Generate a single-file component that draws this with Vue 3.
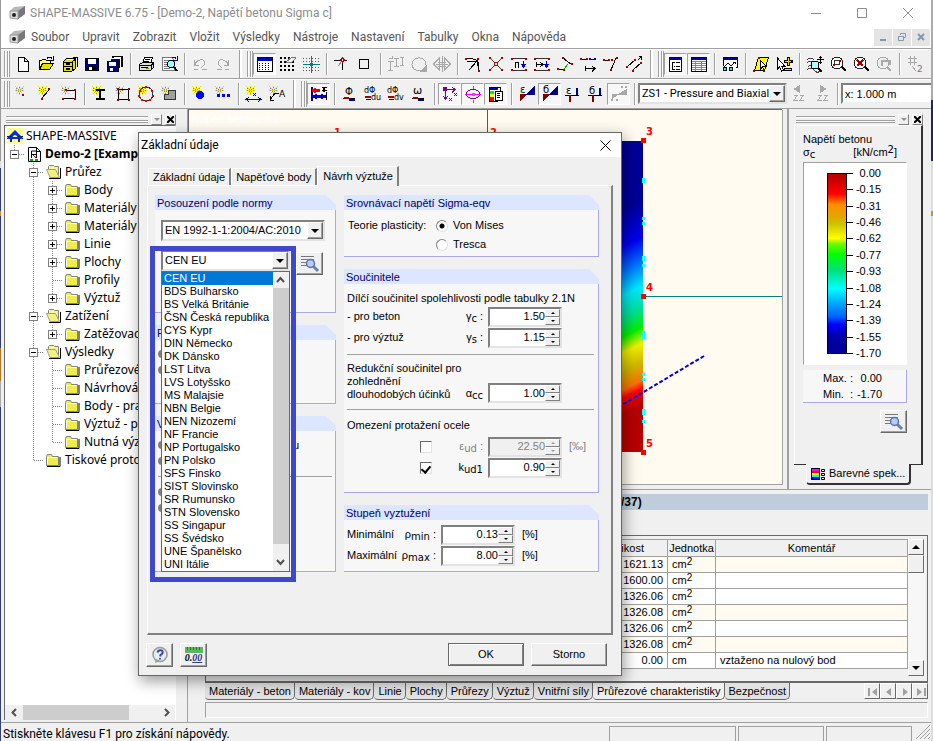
<script setup>
import { ref, reactive } from 'vue'

const p = (d, c = '#000', f = 'none', w = 1) => `<path d="${d}" stroke="${c}" fill="${f}" stroke-width="${w}"/>`
const r = (x, y, w, h, f = '#000') => `<rect x="${x}" y="${y}" width="${w}" height="${h}" fill="${f}"/>`
const dots = (c, ...xy) => xy.map(([x, y]) => r(x - 1, y - 1, 2, 2, c)).join('')
const pix = (c, ...xy) => xy.map(([x, y]) => r(x, y, 1, 1, c)).join('')
const star = r(2, 6, 9, 1, '#e8e000') + pix('#e8e000', [2, 2], [3, 3], [4, 4], [10, 2], [9, 3], [8, 4], [4, 8], [3, 9], [8, 8], [9, 9], [6, 2], [6, 4], [6, 8], [6, 10]) + pix('#808080', [6, 3], [5, 5], [7, 5], [5, 7], [7, 7], [3, 6], [9, 6], [6, 9], [3, 4], [9, 4])
const G = '#a8a8a8'
const R = '#a00000'
const N = '#000080'
const lens = p('M13 12l5 5', '#000', 'none', 2) + '<circle cx="9" cy="9" r="6" fill="#fff" stroke="#222"/>'
const glyph = (t, x, y, s = 11) => `<text x="${x}" y="${y}" font-size="${s}" font-family="DejaVu Sans" fill="#000">${t}</text>`

const icons = {
  new: p('M5.5 3.5h6l4 4v10h-10z', '#000', '#fff') + p('M11.5 3.5v4h4'),
  open: p('M3.5 15.5v-9h2l1-1h3l1 1h4v3', '#000', '#ffff80') + p('M3.5 15.5l3-6h11l-4 6z', '#000', '#e8e000') + p('M11 4.5q3-3 5 0M17.5 2v4h-4'),
  cabinet: p('M4.5 7.5l3-3h9v10l-4 3h-8z', '#000', '#e8e000') + p('M4 8h9M13 8l4-3M13 8v9M5 12.5h8') + r(7, 9, 4, 2) + r(7, 14, 4, 2) + r(8, 5, 6, 1, '#fff') + p('M14 3h4v10', '#000'),
  save: r(3, 4, 14, 13, '#000080') + p('M3.5 4.5h13v12h-12l-1-1z') + r(6, 5, 8, 5, '#fff') + r(6, 12, 8, 5, '#000') + r(7, 13, 3, 3, '#fff'),
  saveall: r(7, 2, 11, 11, '#000080') + p('M7.5 2.5h10v10h-10z') + r(9, 3, 7, 2, '#fff') + r(5, 5, 11, 10, '#000080') + p('M5.5 4.5h10v10h-10z', '#fff') + r(2, 7, 12, 10, '#000080') + p('M2.5 7.5h11v10h-11z') + r(4, 8, 7, 4, '#fff') + r(5, 14, 3, 3, '#fff'),
  print: p('M6.5 9.5l2-6h8l-2 6z', '#000', '#fff') + p('M9 5.5h5M8 7.5h5') + p('M3.5 10.5l3-2h11v5l-3 3h-11z', '#000', '#ddd') + p('M3 11.5h12l3-3M15 11v5M5 13.5h7') + r(10, 14, 3, 1, '#808000'),
  preview: p('M3.5 3.5h9l3 3v10h-12z', '#777', '#fff') + p('M5 6.5h7M5 8.5h6M5 10.5h4M5 12.5h5M5 14.5h6', '#777') + '<circle cx="12" cy="10" r="3.5" fill="#9ff" stroke="#000"/>' + p('M15 13l3 4', '#000', 'none', 2) + p('M13 3.5h3l1 1M18 2v4h-4', N),
  undo: p('M6 11.5L4.5 6v5.5H9M5 10q3-5 8-4 3 2 1 5l-3 3', G) + p('M4 15.5h4M12 15.5h5', G),
  redo: p('M14 11.5L15.5 6v5.5H11M15 10q-3-5-8-4-3 2-1 5l3 3', G) + p('M12 15.5h4M4 15.5h5', G),
  grid: r(2, 3, 16, 15, '#fff') + p('M2.5 3.5h15v14h-15z') + r(3, 4, 14, 3, '#0000c0') + [9, 11, 13, 15].map(y => p(`M4 ${y}.5h12`, '#000').replace('/>', ' stroke-dasharray="1 2"/>')).join(''),
  gridedit: [4, 8, 12, 16].map(y => `<path d="M2 ${y}h16" stroke="#000" stroke-width="2" stroke-dasharray="2 2"/>`).join('') + p('M8 8l6-5 4 1-5 5z', '#777', '#eee'),
  snap: [4, 7, 13, 16].map(y => `<path d="M2 ${y}.5h16" stroke="#555" stroke-dasharray="1 2"/>`).join('') + p('M10.5 2v17M2 10.5h17', '#008080') + p('M9 9l3 3M12 9l-3 3', '#008080'),
  axis: p('M2 6.5h13M10.5 8v8') + p('M10 7l-4 5', '#888') + p('M10.5 4l2 2-2 2-2-2z', R, '#fff'),
  box: '<rect x="4.500" y="5.500" width="9" height="9" fill="none" stroke="#000"/>',
  copy: p('M4.5 7v9M2 7.5h6M2 16.5h5M10.5 4v8M8 4.5h5M8 12.5h5M16.5 3v8M14 3.5h4M14 11.5h4M3 4h3v-2', G),
  rotate: '<path d="M15 15a7 6.500 0 1 1 2-4" fill="none" stroke="#a8a8a8"/>' + p('M12 17h5v-5z', G, G),
  mirror: p('M7.5 4v12l-6-6zM12.5 4v12l6-6z', G) + p('M10 2v16M4 10h12M6 8h8M6 12h8', G),
  t1: p('M2 4.500h6l7 2M4 7.500h8M15.5 8v9M6 16l8-9M10 7.500h4v4') + dots(R, [15, 5], [16, 17], [3, 5]),
  t2: p('M4 4l12 12M16 4L4 16', '#333') + dots(R, [4, 4], [16, 4], [4, 16], [16, 16]) + p('M8.5 8.5h3v3h-3z', R, '#fff'),
  t3: p('M3 4.5h14M3 16.5h14', '#333') + dots(R, [3, 5], [17, 5], [3, 16], [17, 16]) + p('M6.500 14V8.500h3V14') + p('M14.5 7v6M12.5 10.5l2 3 2-3z', '#0000c0', N),
  t4: p('M3 4.5h14M3 16.5h14', '#333') + dots(R, [3, 5], [17, 5], [3, 16], [17, 16]) + p('M4.5 8v5M5 10.5h5M8 8l3 2.5L8 13') + p('M14.5 7v6M12.5 10.5l2 3 2-3z', '#0000c0', N),
  t5: p('M8 4l8 6M3 15.5h6', '#000') + p('M9 15l4-5', '#0a0') + dots(R, [8, 4], [17, 10], [3, 15], [9, 16]),
  t6: p('M2 5.5h6M11 5.5h6M7 14.5h10M7.5 12v5M14 12l3 2.5-3 3') + dots(R, [3, 5], [9, 5]) + dots(N, [12, 5], [17, 5]),
  t7: p('M2 6.5h5M15 4l-5 12', '#000') + dots(R, [3, 6], [8, 6], [11, 6], [10, 16], [16, 4]),
  t8: p('M3 13l8-7M9 16l8-7', '#000') + dots(R, [3, 13], [11, 6], [9, 17], [17, 9]) + p('M15 2.500h2.500v3M14 6l3-3'),
  tree: r(3, 3, 13, 14, '#fff') + p('M3.5 3.5h12v14h-12z') + r(4, 4, 11, 2, '#0000c0') + p('M6.5 8v8M6 8.5h3M8 12.5h1M6 15.5h3M10 8.5h4M10 12.5h4M10 15.5h4'),
  table: r(2, 3, 16, 14, '#fff') + p('M2.5 3.5h15v14h-15z') + r(3, 4, 14, 2, '#0000c0') + p('M3 7.5h14M3 9.5h14M3 11.5h14M3 13.5h14M3 15.5h14M6.5 7v10M12.5 7v10', '#888'),
  legend: r(3, 3, 15, 12, '#fff') + p('M3.5 12V3.5h14v10h-2') + r(4, 4, 13, 2, N) + p('M4 13l4-4 3 3 4-4M13 8h2v2') + '<circle cx="5" cy="15" r="2" fill="#0ff" stroke="#000"/><circle cx="11" cy="15" r="2" fill="#0ff" stroke="#000"/>',
  select: p('M3.5 16.5l4-13h10l-4 13z', '#000', '#ff0') + dots(R, [3, 17], [13, 17], [8, 4]) + p('M9.5 6v9l2-2 2 4M9 6l6 6h-3', '#000', '#fff'),
  pick: p('M3.5 4v11l2-2 2 4 2-1-2-4h3z', '#000', '#fff') + p('M14 3v9M9.500 7.5h9M10 15h8', '#000', 'none', 3) + p('M14 4v7M11 7.5h6M11 15h6', '#e8e000', 'none', 1),
  zoomall: p('M2 6q4-4 7 0M2 9q4-4 7 0M3 13q3-4 5 0M2 16q4-4 7 0t6 1', '#444') + '<circle cx="10" cy="11" r="4" fill="#aff" stroke="#000"/>' + p('M13 14l4 4', '#000', 'none', 2) + p('M15.500 2v8M12 5.500h7M14 3.500h3M14 8.500h3'),
  zoomwin: lens + p('M6.5 6.5h5v4h-5z', '#333') + dots(R, [12, 7], [6, 11]),
  zoomout: lens + p('M6 6l6 6M12 6l-6 6', R, 'none', 2),
  zoomback: '<circle cx="9" cy="9" r="6" fill="#eee" stroke="#a8a8a8"/>' + p('M13 13l4 4M8 12V7h8v4', G, 'none', 2),
  half: p('M5.5 2v9M9.5 2v9M3 4.5h9M3 8.5h9M7 12l4 5', G) + `<text x="12" y="18" font-size="9" font-family="DejaVu Sans" fill="#777">2</text>`,

  pt: star + dots(R, [10, 11]),
  ln: star + p('M6 14l7-8') + dots(R, [6, 15], [13, 5]),
  rectl: star + p('M7 6.500h9v8H4') + dots(R, [16, 6], [16, 15], [4, 15], [7, 6]),
  prof: star + r(6, 5, 9, 2) + r(9, 6, 2, 10) + r(6, 14, 9, 2),
  sq: star + p('M5.5 5.5h10v10h-10z') + dots(R, [5, 5], [16, 5], [5, 16], [16, 16]),
  circ: star + '<circle cx="10" cy="10" r="7" fill="none" stroke="#333"/>' + dots('#e00', [4, 7], [16, 7], [10, 3], [10, 17], [3, 12], [17, 12], [6, 16], [14, 16]),
  area: star + p('M9.500 6.5h7v9h-11v-5h4z', '#333', '#a0a0a0'),
  bar: star + '<circle cx="10" cy="11" r="4" fill="#00f"/>',
  bars: star + r(4, 10, 3, 3, '#00f') + r(9, 10, 3, 3, '#00f') + r(14, 10, 3, 3, '#00f'),
  dim: star + p('M2 15.5h15M5 13l-3 2.5 3 2M14 13l3 2.5-3 2', N) + p('M9 9l3 3M12 9l-3 3', '#00c'),
  text: star + p('M3 16l5-7h4M3 12v4h4') + glyph('A', 12, 13, 9),
  stress: r(2, 3, 2, 14, N) + r(3, 5, 8, 3, '#e00') + r(3, 11, 14, 3, '#00c') + r(5, 4, 2, 5, '#e00') + r(6, 10, 2, 5, '#00c') + r(12, 10, 2, 5, '#00c') + p('M13 3.5h5M13 6.5h5M17.5 8v8') + r(14, 4, 2, 4),
  phi: glyph('Φ', 5, 11, 10) + p('M3 14.5h12') + p('M4 14h5', R, 'none', 2) + p('M9 16h6', N, 'none', 2),
  phiu: glyph('dΦ', 1, 9, 8) + glyph('du', 8, 16, 8) + p('M2 12.5h6', R, 'none', 2) + p('M3 15.5h5', N),
  phiv: glyph('dΦ', 1, 9, 8) + glyph('dv', 8, 16, 8) + p('M2 12.5h6', R, 'none', 2) + p('M3 15.5h5', N),
  omega: glyph('ω', 4, 10, 11) + p('M3 14.5h12') + p('M4 14h5', R, 'none', 2) + p('M9 16h6', N, 'none', 2),
  axes: p('M5.5 5v9M4 5.5h10M12 3l3 2.5-3 3M3 12l2.5 3 2.5-3', '#800080') + r(3, 3, 4, 4, '#800080') + p('M14 9l3 3M17 9l-3 3M9 14l3 3M12 14l-3 3', '#800080'),
  ell: '<ellipse cx="10" cy="10" rx="6.500" ry="4.500" fill="none" stroke="#800080"/>' + p('M10.500 2v3M10.500 16v3M2 10.5h16', '#f0f') + r(9, 9, 3, 3, '#f3f'),
  spec: r(3, 3, 12, 15, '#fff') + p('M3.500 3.500h11v4M3.500 3v14h8') + r(4, 4, 8, 2, '#00c') + r(4, 7, 4, 3, '#0e0') + r(4, 10, 4, 3, '#ff0') + r(4, 13, 4, 4, '#f00') + p('M9.5 7.5h7v9h-7zM11 9.5h3M11 11.5h3M11 13.5h3', '#000', '#fff'),
  e1: glyph('ε', 3, 9, 10) + p('M3 10.5h14') + p('M3 10.5v6l6-6z', '#800000', '#800000') + p('M10 10h7V3z', N, N),
  s1: glyph('б', 3, 9, 10) + p('M3 10.5h14') + p('M3 10.5v6l6-6z', '#800000', '#800000') + p('M10 10h7V3z', N, N),
  e2: glyph('ε', 3, 10, 10) + p('M2 11.5h14') + r(6, 11, 2, 7, '#800000') + r(13, 4, 2, 7, N),
  s2: glyph('б', 3, 10, 10) + p('M2 11.5h14') + r(6, 11, 2, 7, '#800000') + r(13, 4, 2, 7, N),
  off: p('M3 10.5h14', G) + p('M3 10.5v4l6-4zM10 10h7V6z', G, G) + p('M12 2l2 2M14 2l-2 2M16 2l2 2M18 2l-2 2M2 15l2 2M4 15l-2 2M7 15l2 2M9 15l-2 2', G),
  prev: p('M10.5 1.5v7l-5-3.5z', G, G) + p('M5 11.5h3l-3 5h4M11 11.5h3l-3 5h4', G),
  next: p('M8.5 1.5v7l5-3.5z', G, G) + p('M6 11.5h3l-3 5h4M12 11.5h3l-3 5h4', G),
}

const bar1 = [
  { id: 'new', t: 'Nový' }, { id: 'open', t: 'Otevřít' }, { id: 'cabinet', t: 'Projekty' }, { id: 'save', t: 'Uložit' }, { id: 'saveall', t: 'Uložit vše' }, '|',
  { id: 'print', t: 'Tisk' }, { id: 'preview', t: 'Náhled' }, '|', { id: 'undo', t: 'Zpět' }, { id: 'redo', t: 'Znovu' }, '#',
  { id: 'grid', t: 'Rastr', on: true }, { id: 'gridedit', t: 'Upravit rastr' }, { id: 'snap', t: 'Úchop' }, '|', { id: 'axis', t: 'Osy' }, { id: 'box', t: 'Rámeček' }, '|',
  { id: 'copy', t: 'Kopírovat' }, { id: 'rotate', t: 'Otočit' }, { id: 'mirror', t: 'Zrcadlit' }, '|',
  ...['t1', 't2', 't3', 't4', 't5', 't6', 't7', 't8'].map(id => ({ id, t: 'Úprava linie ' + id[1] })), '#',
  { id: 'tree', t: 'Navigátor', on: true }, { id: 'table', t: 'Tabulky', on: true }, '|', { id: 'legend', t: 'Zobrazení' }, '|',
  { id: 'select', t: 'Výběr' }, { id: 'pick', t: 'Přidat výběr' }, '|', { id: 'zoomall', t: 'Vše' }, { id: 'zoomwin', t: 'Zoom okno' }, { id: 'zoomout', t: 'Zoom zrušit' }, { id: 'zoomback', t: 'Zoom zpět' }, '|', { id: 'half', t: 'Měřítko' },
]
const bar2 = [
  { id: 'pt', t: 'Bod' }, { id: 'ln', t: 'Linie' }, { id: 'rectl', t: 'Polylinie' }, '|', { id: 'prof', t: 'Profil' }, { id: 'sq', t: 'Obdélník' }, { id: 'circ', t: 'Kružnice' }, { id: 'area', t: 'Plocha' }, '|',
  { id: 'bar', t: 'Prut' }, { id: 'bars', t: 'Pruty' }, '|', { id: 'dim', t: 'Kóta' }, { id: 'text', t: 'Popis' }, '#',
  { id: 'stress', t: 'Napětí', on: true }, '|', { id: 'phi', t: 'Fí' }, { id: 'phiu', t: 'Fí u' }, { id: 'phiv', t: 'Fí v' }, { id: 'omega', t: 'Omega' }, '|',
  { id: 'axes', t: 'Osy', on: true }, { id: 'ell', t: 'Elipsa', on: true }, { id: 'spec', t: 'Spektrum', on: true }, '|',
  { id: 'e1', t: 'Přetvoření' }, { id: 's1', t: 'Napětí betonu', on: true }, { id: 'e2', t: 'Přetvoření oceli' }, { id: 's2', t: 'Napětí oceli' }, { id: 'off', t: 'Hodnoty', on: true }, '|',
]

const menus = ['Soubor', 'Upravit', 'Zobrazit', 'Vložit', 'Výsledky', 'Nástroje', 'Nastavení', 'Tabulky', 'Okna', 'Nápověda']

// Each guide cell: '|' line passing by, 'T' branch, 'L' last branch; '+' or '-' adds a toggle.
const tree = [
  { g: [], icon: 'app', label: 'SHAPE-MASSIVE' },
  { g: ['L-'], icon: 'model', label: 'Demo-2 [Example', bold: true },
  { g: ['', 'T-'], icon: 'open', label: 'Průřez' },
  { g: ['', '|', 'T+'], label: 'Body' },
  { g: ['', '|', 'T+'], label: 'Materiály -' },
  { g: ['', '|', 'T+'], label: 'Materiály -' },
  { g: ['', '|', 'T+'], label: 'Linie' },
  { g: ['', '|', 'T+'], label: 'Plochy' },
  { g: ['', '|', 'T'], label: 'Profily' },
  { g: ['', '|', 'L+'], label: 'Výztuž' },
  { g: ['', 'T-'], icon: 'open', label: 'Zatížení' },
  { g: ['', '|', 'L+'], label: 'Zatěžovací' },
  { g: ['', 'T-'], icon: 'open', label: 'Výsledky' },
  { g: ['', '|', 'T'], label: 'Průřezové' },
  { g: ['', '|', 'T'], label: 'Návrhová' },
  { g: ['', '|', 'T'], label: 'Body - pra' },
  { g: ['', '|', 'T'], label: 'Výztuž - pr' },
  { g: ['', '|', 'L'], label: 'Nutná výz' },
  { g: ['', 'L'], label: 'Tiskové protok' },
]
const guide = c => {
  let d = ''
  if (c[0] === '|' || c[0] === 'T') d += 'M9.5 0V18'
  if (c[0] === 'L') d += 'M9.5 0V9'
  if (c[0] === 'T' || c[0] === 'L') d += 'M10 9.5H20'
  return d
}

const scale = ['0.00', '-0.15', '-0.31', '-0.46', '-0.62', '-0.77', '-0.93', '-1.08', '-1.24', '-1.39', '-1.55', '-1.70']

const rows = [
  { v: '1621.13', u: 'cm', e: '2', c: '', tint: true },
  { v: '1600.00', u: 'cm', e: '2', c: '' },
  { v: '1326.06', u: 'cm', e: '2', c: '' },
  { v: '1326.08', u: 'cm', e: '2', c: '', tint: true },
  { v: '1326.06', u: 'cm', e: '2', c: '' },
  { v: '1326.08', u: 'cm', e: '2', c: '', tint: true },
  { v: '0.00', u: 'cm', e: '', c: 'vztaženo na nulový bod' },
]
const sheets = ['Materiály - beton', 'Materiály - kov', 'Linie', 'Plochy', 'Průřezy', 'Výztuž', 'Vnitřní síly', 'Průřezové charakteristiky', 'Bezpečnost']
const navs = [
  { t: 'První', d: 'M3 4h2v8H3zM12 4v8L7 8z' }, { t: 'Předchozí', d: 'M10 4v8L5 8z' },
  { t: 'Další', d: 'M6 4v8l5-4z' }, { t: 'Poslední', d: 'M11 4h2v8h-2zM4 4v8l5-4z' },
]

const codes = ['CEN EU', 'BDS Bulharsko', 'BS Velká Británie', 'ČSN Česká republika', 'CYS Kypr', 'DIN Německo', 'DK Dánsko', 'LST Litva', 'LVS Lotyšsko', 'MS Malajsie', 'NBN Belgie', 'NEN Nizozemí', 'NF Francie', 'NP Portugalsko', 'PN Polsko', 'SFS Finsko', 'SIST Slovinsko', 'SR Rumunsko', 'STN Slovensko', 'SS Singapur', 'SS Švédsko', 'UNE Španělsko', 'UNI Itálie']
const code = ref('CEN EU')
const theory = ref('mises')
const limitEps = ref(false)
const limitK = ref(true)
const val = reactive({ gc: '1.50', gs: '1.15', acc: '1.00', eud: '22.50', kud: '0.90', min: '0.13', max: '8.00' })
</script>

<template>
  <div class="app">
    <header class="title">
      <svg class="logo" width="17" height="16" viewBox="0 0 17 16"><path d="M1 6l4-4 11-1v8l-7 5-8-1z" fill="#b8b8b8" /><path d="M9 6l7-5v8l-7 5z" fill="#777" /><path d="M1 6h8v8l-8-1z" fill="#ddd" stroke="#999" /><circle cx="5" cy="10" r="2" fill="#222" /></svg>
      <h1>SHAPE-MASSIVE 6.75 - [Demo-2, Napětí betonu Sigma c]</h1>
      <button aria-label="Minimalizovat"><svg width="12" height="12"><path d="M1 6.5h10" /></svg></button>
      <button aria-label="Maximalizovat"><svg width="12" height="12"><path d="M1.500 1.500h9v9h-9z" /></svg></button>
      <button aria-label="Zavřít"><svg width="12" height="12"><path d="M1 1l10 10M11 1L1 11" /></svg></button>
    </header>

    <nav class="menu">
      <svg class="logo" width="17" height="16" viewBox="0 0 17 16"><path d="M1 6l4-4 11-1v8l-7 5-8-1z" fill="#b8b8b8" /><path d="M9 6l7-5v8l-7 5z" fill="#777" /><path d="M1 6h8v8l-8-1z" fill="#ddd" stroke="#999" /><circle cx="5" cy="10" r="2" fill="#222" /></svg>
      <a v-for="m in menus" :key="m" href="#">{{ m }}</a>
      <div class="mdi">
        <button aria-label="Minimalizovat dokument"><svg width="10" height="10"><path d="M2 8h6" /></svg></button>
        <button aria-label="Obnovit dokument"><svg width="10" height="10"><path d="M3.500 3V1.500h5v4H7M1.500 4.500h5v4h-5zM1 4.500h6" class="thin" /></svg></button>
        <button aria-label="Zavřít dokument"><svg width="10" height="10"><path d="M2 2l6 6M8 2L2 8" /></svg></button>
      </div>
    </nav>

    <div class="bar">
      <i class="grip start"></i>
      <template v-for="(b, i) in bar1" :key="i">
        <i v-if="b === '|'" class="sep"></i>
        <span v-else-if="b === '#'" class="brk"><i class="grip"></i></span>
        <button v-else class="tb" :class="{ on: b.on }" :aria-label="b.t"><svg width="20" height="20" v-html="icons[b.id]"></svg></button>
      </template>
    </div>
    <div class="bar">
      <i class="grip start"></i>
      <template v-for="(b, i) in bar2" :key="i">
        <i v-if="b === '|'" class="sep"></i>
        <span v-else-if="b === '#'" class="brk"><i class="grip"></i></span>
        <button v-else class="tb" :class="{ on: b.on }" :aria-label="b.t"><svg width="20" height="20" v-html="icons[b.id]"></svg></button>
      </template>
      <div class="combo case">
        <select aria-label="Zatěžovací stav"><option>ZS1 - Pressure and Biaxial</option></select>
        <span class="drop"></span>
      </div>
      <button class="tb" aria-label="Předchozí stav"><svg width="20" height="20" v-html="icons.prev"></svg></button>
      <button class="tb" aria-label="Další stav"><svg width="20" height="20" v-html="icons.next"></svg></button>
      <i class="sep"></i>
      <input class="pos" aria-label="Poloha" value="x: 1.000 m">
    </div>

    <main class="work">
      <aside class="dock left">
        <div class="cap"><i class="ridge"></i><button aria-label="Nabídka panelu" class="mini"><i class="down"></i></button><button aria-label="Zavřít panel" class="mini"><svg width="7" height="7"><path d="M0 0l7 7M7 0L0 7" /></svg></button></div>
        <div class="treebox">
          <ul class="tree">
            <li v-for="(n, i) in tree" :key="i">
              <svg v-for="(c, k) in n.g" :key="k" class="cell" width="19" height="18">
                <path :d="guide(c)" stroke="#808080" stroke-dasharray="1 1" />
                <template v-if="c[1]">
                  <rect x="5.500" y="5.500" width="8" height="8" fill="#fff" stroke="#808080" />
                  <path :d="c[1] === '+' ? 'M7 9.5h5M9.5 7v5' : 'M7 9.5h5'" stroke="#000" />
                </template>
              </svg>
              <svg v-if="n.icon === 'app'" class="ic" width="16" height="16"><rect width="16" height="16" fill="#ffff90" /><path d="M0 10L8 2l8 8v1H0z" fill="#0030e0" /><path d="M0 8.500h16" stroke="#0020a0" /><path d="M5.500 9q2.500-4 5 0" fill="#ffff90" /><path d="M4 10v4M12 10v4" stroke="#0020c0" stroke-width="2" /></svg>
              <svg v-else-if="n.icon === 'model'" class="ic" width="16" height="16"><path d="M2.500 1.500h8l4 4v10h-12z" fill="#fff" stroke="#000" /><path d="M10.500 1.500v4h4M5.500 12V5h5v7M5 8.500h6" fill="none" stroke="#000" /><path d="M7 9l3 3" stroke="#a00" /><path d="M4 14h3M9 14h3" stroke="#0a0" stroke-width="2" /></svg>
              <svg v-else-if="n.icon === 'open'" class="ic" width="17" height="16"><path d="M3.500 5.500v-3l1-1h4l1 1h4v9" fill="#f6f6a0" stroke="#808080" /><path d="M5 13.500L1.500 5.500h9l4 8z" fill="#f2f080" stroke="#a0a080" /><path d="M4 14.500h11.500V4" fill="none" stroke="#000" /></svg>
              <svg v-else class="ic" width="17" height="16"><path d="M1.500 13.500V4.500l1-2h4l1 2h6v9z" fill="#efec50" stroke="#808080" /><path d="M2.500 12V5.500h10" fill="none" stroke="#fff" /><path d="M2 14.500h13V5" fill="none" stroke="#000" /></svg>
              <span :class="{ bold: n.bold }">{{ n.label }}</span>
            </li>
          </ul>
          <div class="hscroll"><svg width="18" height="15"><path d="M11 4L7.500 7.500 11 11" /></svg><i></i><svg width="16" height="15"><path d="M6 4l3.500 3.500L6 11" /></svg></div>
        </div>
      </aside>

      <div class="center">
        <div class="upper">
          <section class="view">
            <svg class="scene" width="594" height="375" viewBox="189 110 594 375">
              <defs>
                <linearGradient id="stress" gradientUnits="userSpaceOnUse" x1="632" y1="205" x2="714" y2="369">
                  <stop offset="0" stop-color="#000096" /><stop offset=".18" stop-color="#0000f0" /><stop offset=".3" stop-color="#0070ff" /><stop offset=".42" stop-color="#00e8ff" />
                  <stop offset=".53" stop-color="#00e090" /><stop offset=".62" stop-color="#00f000" /><stop offset=".7" stop-color="#f0f000" /><stop offset=".79" stop-color="#d0b800" />
                  <stop offset=".88" stop-color="#ff7000" /><stop offset=".92" stop-color="#ff0000" /><stop offset="1" stop-color="#b80000" />
                </linearGradient>
              </defs>
              <text x="192" y="123" font-size="11" fill="#fff">Napětí betonu σ c</text>
              <path d="M487.500 110v40M646 296.500H783" stroke="#008080" />
              <rect x="337" y="141" width="306" height="311" fill="url(#stress)" />
              <path d="M704 356L610 412" stroke="#0000e0" stroke-width="2" stroke-dasharray="4 2" />
              <path d="M642.500 178v5M644.500 178v5M642.500 217v3M644.500 217v3M642.500 222v3M644.500 222v3M642.500 256v5M644.500 256v5M642.500 264v3M644.500 264v3M642.500 331v8M644.500 331v8M642.500 373v3M644.500 373v3M642.500 378v3M644.500 378v3M642.500 409v6M644.500 409v6M642.500 420v3M644.500 420v3" stroke="#00ffff" />
              <path d="M641 138h5v5h-5zM641 294h5v5h-5zM641 450h5v5h-5z" fill="#f00" />
              <g class="num"><text x="334" y="136">1</text><text x="490" y="136">2</text><text x="646" y="135">3</text><text x="646" y="291">4</text><text x="646" y="447">5</text></g>
              <g class="num pale"><text x="646" y="223">3</text><text x="646" y="378">3</text></g>
            </svg>
          </section>
          <aside class="dock right">
            <div class="cap"><i class="ridge"></i><button aria-label="Nabídka legendy" class="mini"><i class="down"></i></button><button aria-label="Zavřít legendu" class="mini"><svg width="7" height="7"><path d="M0 0l7 7M7 0L0 7" /></svg></button></div>
            <div class="page">
              <p>Napětí betonu</p>
              <p class="unit"><span>σ<sub>c</sub></span><span>[kN/cm<sup>2</sup>]</span></p>
              <div class="scale">
                <div class="spectrum"></div>
                <ul><li v-for="s in scale" :key="s"><i></i>{{ s }}</li></ul>
              </div>
              <dl class="extreme"><dt>Max. :</dt><dd>0.00</dd><dt>Min.&nbsp; :</dt><dd>-1.70</dd></dl>
              <button class="btn find" aria-label="Nastavení legendy"><svg width="20" height="18"><path d="M1 1.500h13M1 4.500h13M1 7.500h7M1 10.500h7" stroke="#777" /><path d="M13 11l5 5" stroke="#6a80b8" stroke-width="3" /><circle cx="10.500" cy="8.500" r="4" fill="#b8ccf0" stroke="#5a72b0" stroke-width="1.500" /></svg></button>
            </div>
            <div class="tabrow"><i class="edge"></i><a href="#" class="ptab"><svg width="14" height="12"><rect width="9" height="12" /><path d="M1 2h7" stroke="#f0f" stroke-width="2" /><path d="M1 4h7" stroke="#f00" stroke-width="2" /><path d="M1 6h7" stroke="#ff0" stroke-width="2" /><path d="M1 8h7" stroke="#0ff" stroke-width="2" /><path d="M1 10h7" stroke="#00f" stroke-width="2" /><path d="M10.500 1.500h3v2h-3zM10.500 5.500h3v2h-3zM10.500 9.500h3v2h-3z" fill="none" stroke="#000" /></svg>Barevné spek...</a><i class="edge end"></i></div>
          </aside>
        </div>

        <section class="lower">
          <h2>/37)</h2>
          <div class="sheet">
            <table>
              <colgroup><col><col class="cu"><col class="cc"></colgroup>
              <thead><tr><th class="size">Velikost</th><th>Jednotka</th><th>Komentář</th></tr></thead>
              <tbody>
                <tr v-for="(w, i) in rows" :key="i" :class="{ tint: w.tint }"><td class="num">{{ w.v }}</td><td>{{ w.u }}<sup>{{ w.e }}</sup></td><td>{{ w.c }}</td></tr>
              </tbody>
            </table>
            <div class="vscroll"><button aria-label="Nahoru"><i class="up"></i></button><i class="thumb"></i><button aria-label="Dolů"><i class="down"></i></button></div>
          </div>
          <div class="sheets">
            <a v-for="s in sheets" :key="s" href="#" :class="{ cur: s === 'Průřezové charakteristiky' }">{{ s }}</a>
            <span class="navs"><button v-for="n in navs" :key="n.t" :aria-label="n.t"><svg width="15" height="16"><path :d="n.d" fill="#a0a0a0" /></svg></button></span>
          </div>
          <div class="tray"></div>
        </section>
      </div>
    </main>

    <footer class="status"><span class="msg">Stiskněte klávesu F1 pro získání nápovědy.</span><i class="wide"></i><i></i><i></i><svg width="18" height="16"><path d="M17 2L3 16M17 6L7 16M17 10l-6 6M17 14l-2 2" stroke="#a0a0a0" /></svg></footer>

    <div class="dialog" role="dialog" aria-labelledby="dlg">
      <div class="dtitle"><h2 id="dlg">Základní údaje</h2><button aria-label="Zavřít dialog"><svg width="11" height="11"><path d="M.5.5l10 10M10.500.5l-10 10" /></svg></button></div>
      <div class="dtabs"><a href="#">Základní údaje</a><a href="#">Napěťové body</a><a href="#" class="cur">Návrh výztuže</a></div>
      <div class="dpage">
        <div class="col">
          <section class="group norm">
            <h3>Posouzení podle normy</h3>
            <div class="body">
              <div class="combo code"><select aria-label="Norma"><option>EN 1992-1-1:2004/AC:2010</option></select><span class="drop"></span></div>
              <div class="annex">
                <div class="picker">
                  <div class="combo"><select v-model="code" aria-label="Národní příloha"><option v-for="c in codes" :key="c">{{ c }}</option></select><span class="drop"></span></div>
                  <div class="popup">
                    <ul role="listbox" aria-label="Národní přílohy"><li v-for="c in codes" :key="c" role="option" :aria-selected="c === code" @click="code = c">{{ c }}</li></ul>
                    <div class="pscroll"><svg width="15" height="16"><path d="M4 10l3.500-4L11 10" /></svg><i></i><svg width="15" height="27"><path d="M4 16l3.500 4L11 16" /></svg></div>
                  </div>
                  <div class="mark"></div>
                </div>
                <button class="btn find" aria-label="Detaily přílohy"><svg width="20" height="18"><path d="M1 1.500h13M1 4.500h13M1 7.500h7M1 10.500h7" stroke="#777" /><path d="M13 11l5 5" stroke="#6a80b8" stroke-width="3" /><circle cx="10.500" cy="8.500" r="4" fill="#b8ccf0" stroke="#5a72b0" stroke-width="1.500" /></svg></button>
              </div>
            </div>
          </section>
          <section class="group second"><h3>P</h3><div class="body stubs"><i></i><i></i></div></section>
          <section class="group third"><h3>V</h3><div class="body stubs"><div class="tail"><i></i><span>u</span></div><i></i><hr><i></i><i></i></div></section>
        </div>

        <div class="col">
          <section class="group">
            <h3>Srovnávací napětí Sigma-eqv</h3>
            <div class="body theory">
              <span>Teorie plasticity:</span>
              <div class="opts">
                <label><input v-model="theory" type="radio" name="theory" value="mises">Von Mises</label>
                <label><input v-model="theory" type="radio" name="theory" value="tresca">Tresca</label>
              </div>
            </div>
          </section>

          <section class="group coef">
            <h3>Součinitele</h3>
            <div class="body">
              <p class="intro">Dílčí součinitel spolehlivosti podle tabulky 2.1N</p>
              <div class="line"><label for="gc">- pro beton</label><span class="sym">γ<sub>c</sub> :</span><div class="spin"><input id="gc" v-model="val.gc"><span><button aria-label="Zvýšit"><i class="up"></i></button><button aria-label="Snížit"><i class="down"></i></button></span></div></div>
              <div class="line"><label for="gs">- pro výztuž</label><span class="sym">γ<sub>s</sub> :</span><div class="spin"><input id="gs" v-model="val.gs"><span><button aria-label="Zvýšit"><i class="up"></i></button><button aria-label="Snížit"><i class="down"></i></button></span></div></div>
              <hr>
              <div class="line tall"><label for="acc">Redukční součinitel pro zohlednění dlouhodobých účinků</label><span class="sym">α<sub>cc</sub></span><div class="spin"><input id="acc" v-model="val.acc"><span><button aria-label="Zvýšit"><i class="up"></i></button><button aria-label="Snížit"><i class="down"></i></button></span></div></div>
              <hr>
              <p class="sub">Omezení protažení ocele</p>
              <div class="line off"><label class="chk"><input v-model="limitEps" type="checkbox" aria-label="Omezit εud"></label><label class="sym" for="eud">ε<sub>ud</sub> :</label><div class="spin"><input id="eud" v-model="val.eud" disabled><span><button disabled aria-label="Zvýšit"><i class="up"></i></button><button disabled aria-label="Snížit"><i class="down"></i></button></span></div><span class="u">[‰]</span></div>
              <div class="line"><label class="chk"><input v-model="limitK" type="checkbox" aria-label="Omezit kud1"></label><label class="sym" for="kud">k<sub>ud1</sub></label><div class="spin"><input id="kud" v-model="val.kud"><span><button aria-label="Zvýšit"><i class="up"></i></button><button aria-label="Snížit"><i class="down"></i></button></span></div></div>
            </div>
          </section>

          <section class="group ratio">
            <h3>Stupeň vyztužení</h3>
            <div class="body">
              <div class="line"><label for="rmin">Minimální</label><span class="sym">ρ<sub>min</sub> :</span><div class="spin"><input id="rmin" v-model="val.min"><span><button aria-label="Zvýšit"><i class="up"></i></button><button aria-label="Snížit"><i class="down"></i></button></span></div><span class="u">[%]</span></div>
              <div class="line"><label for="rmax">Maximální</label><span class="sym">ρ<sub>max</sub> :</span><div class="spin"><input id="rmax" v-model="val.max"><span><button aria-label="Zvýšit"><i class="up"></i></button><button aria-label="Snížit"><i class="down"></i></button></span></div><span class="u">[%]</span></div>
            </div>
          </section>
        </div>
      </div>
      <div class="dfoot">
        <button class="btn sq" aria-label="Nápověda"><svg width="18" height="18"><circle cx="9" cy="8.500" r="7" fill="#e8ecf2" stroke="#999" stroke-width="1.500" /><path d="M4 17l1-4 4 2z" fill="#999" /><path d="M6.500 6.500q.5-2.500 3-2.300 2.500.3 2.200 2.300-.2 1.500-2.200 2.500l-.3 1.500M9 12v1.500" fill="none" stroke="#3a4a9a" stroke-width="2" /></svg></button>
        <button class="btn sq dec" aria-label="Desetinná místa"><svg width="18" height="6"><rect width="18" height="6" fill="#5cb85c" /><path d="M2.500 0v3M5.500 0v3M8.500 0v3M11.500 0v3M14.500 0v3" stroke="#2a7a2a" /></svg><span>0.<u>00</u></span></button>
        <span class="gap"></span>
        <button class="btn wide def">OK</button>
        <button class="btn wide">Storno</button>
      </div>
    </div>
  </div>
</template>

<style>
body {
  background: #dcdcdc;
}
</style>

<style scoped>
* { box-sizing: border-box; }
.app {
  position: relative;
  display: flex;
  flex-direction: column;
  height: 100vh;
  overflow: hidden;
  padding: 0 2px 0 1px;
  font: 11px/13px "Liberation Sans", Arial, sans-serif;
  color: #000;
  background:
    linear-gradient(#9a9a9a 161px, #ddd 161px 168px, #34406e 168px 211px, #c8902c 211px 216px, #34406e 216px 348px, #b07820 348px 381px, #aaa 381px 407px, #34406e 407px) left / 1px 100% no-repeat,
    linear-gradient(#aaa 100px, #1c2a5a 100px 161px, #ddd 161px 211px, #c8902c 211px 216px, #ddd 216px) right / 2px 100% no-repeat;
}
button { font: inherit; padding: 0; border: 0; background: none; color: inherit; }
a { color: inherit; text-decoration: none; }
h1, h2, h3, p, ul, dl, dd { margin: 0; padding: 0; font: inherit; list-style: none; }
svg { display: block; flex: none; }
i { display: block; flex: none; }
sub, sup { line-height: 0; font-size: inherit; }

.title, .menu { display: flex; align-items: center; background: #fff; font: 12px/16px Roboto, "Noto Sans", sans-serif; }
.title { height: 26px; padding-left: 8px; color: #8c8c8c; }
.title h1 { flex: 1; margin-left: 4px; white-space: nowrap; }
.title button { display: grid; place-items: center; width: 46px; height: 24px; }
.title button svg { fill: none; stroke: #8c8c8c; }
.menu { height: 22px; padding-left: 8px; color: #555; gap: 13px; }
.menu .logo { margin-right: -8px; }
.mdi { display: flex; gap: 1px; margin-left: auto; padding-right: 1px; }
.mdi button { display: grid; place-items: center; width: 18px; height: 17px; background: #e4e4e4; }
.mdi svg { fill: none; stroke: #8496b0; stroke-width: 2; }
.mdi .thin { stroke-width: 1; }

.bar { display: flex; align-items: center; height: 30px; background: #f0f0f0; border-top: 1px solid #a0a0a0; box-shadow: inset 0 1px #fff; }
.bar + .bar { border-bottom: 1px solid #a0a0a0; height: 31px; }
.grip { width: 6px; height: 26px; border: solid #a0a0a0; border-width: 0 1px; background: linear-gradient(90deg, #fff 1px, #f0f0f0 1px 2px, #a0a0a0 2px 3px, #fff 3px); }
.grip.start { margin: 0 1px 0 3px; }
.brk { display: flex; align-items: center; width: 19px; height: 28px; padding-left: 5px; }
.brk::before { content: ""; width: 2px; height: 28px; margin-right: 5px; border-left: 1px solid #a0a0a0; background: #fff; }
.sep { width: 8px; height: 22px; background: linear-gradient(90deg, transparent 4px, #a0a0a0 4px 5px, #fff 5px 6px, transparent 6px); }
.tb { flex: none; width: 23px; height: 22px; padding-left: 1px; border: 1px solid transparent; }
.tb svg { shape-rendering: crispEdges; }
.tb.on { border-color: #a0a0a0 #fff #fff #a0a0a0; background: #f7f7f7; }
.combo { display: grid; border: 2px solid; border-color: #808080 #e3e3e3 #e3e3e3 #808080; background: #fff; }
.combo > * { grid-area: 1 / 1; }
.combo select { appearance: none; min-width: 0; height: 17px; padding: 0 16px 0 2px; border: 0; font: inherit; color: #000; background: none; }
.drop { display: grid; place-items: center; justify-self: end; width: 16px; height: 17px; background: #f0f0f0; border: 1px solid; border-color: #fff #696969 #696969 #fff; box-shadow: inset -1px -1px #a0a0a0; pointer-events: none; }
.drop::after, .down { content: ""; width: 0; height: 0; border: solid transparent; border-width: 4px 4px 0; border-top-color: #000; }
.up { width: 0; height: 0; border: solid transparent; border-width: 0 4px 4px; border-bottom-color: #000; }
.case { width: 149px; font-family: Roboto, "Liberation Sans", sans-serif; }
.pos { flex: 1; min-width: 0; height: 21px; padding: 0 2px; border: 2px solid; border-color: #808080 #f0f0f0 #f0f0f0 #808080; border-right: 0; font: inherit; color: #000; }

.work { display: flex; flex: 1; min-height: 0; background: #f0f0f0; }
.dock { display: flex; flex-direction: column; }
.left { width: 187px; padding: 4px 11px 2px 3px; border-right: 1px solid #a0a0a0; }
.cap { display: flex; align-items: center; gap: 3px; height: 12px; padding-left: 2px; }
.ridge { flex: 1; height: 7px; border: solid #a0a0a0; border-width: 1px 0; background: linear-gradient(#fff 1px, #f0f0f0 1px 3px, #a0a0a0 3px 4px, #fff 4px); }
.mini { display: grid; place-items: center; width: 11px; height: 11px; border: 1px solid; border-color: #fff #808080 #808080 #fff; }
.mini svg { fill: none; stroke: #000; stroke-width: 2; }
.mini .down { border-width: 3px 3px 0; border-top-color: #909090; }
.treebox { display: flex; flex-direction: column; flex: 1; border: 1px solid #696969; border-right-color: #fff; border-bottom: 0; background: #fff; }
.tree { flex: 1; padding-top: 1px; overflow: hidden; font: 12px/18px "Noto Sans", "Open Sans", sans-serif; }
.tree li { display: flex; align-items: center; height: 18px; padding-left: 0; white-space: nowrap; }
.cell { fill: none; }
.ic { margin: 0 3px 0 2px; }
.bold { font-weight: 700; }
.hscroll { display: flex; height: 15px; background: #f0f0f0; }
.hscroll svg, .pscroll svg { fill: none; stroke: #505050; stroke-width: 2; }
.hscroll i { width: 106px; margin-right: auto; background: #cdcdcd; }

.center { display: flex; flex: 1; flex-direction: column; min-width: 0; }
.upper { display: flex; flex: 1; min-height: 0; border-bottom: 1px solid #a0a0a0; }
.view { flex: 1; min-width: 0; margin-bottom: 5px; overflow: hidden; background: #fffbf0; border: 1px solid #696969; border-width: 1px 0 0 1px; box-shadow: 1px 1px #a0a0a0; }
.num text { font: 700 10px "DejaVu Sans", sans-serif; fill: #f00; }
.pale text { fill: #fff; }
.right { width: 144px; margin-left: 5px; padding: 4px 8px 4px 5px; border-left: 2px solid #a0a0a0; }
.page { flex: 1; padding: 7px 14px 0 8px; border: solid #fff; border-width: 1px 0 0 1px; border-right: 2px solid #333; }
.unit { display: flex; justify-content: space-between; padding-right: 10px; font-size: 11px; }
.unit sub, .unit sup, .sym sub { font-family: "DejaVu Sans", sans-serif; font-size: 10px; }
.unit sub, .sym sub { vertical-align: -2px; }
.unit sup { vertical-align: 3px; }
.scale { display: flex; margin-top: 3px; height: 203px; padding: 10px 25px 10px 23px; border: 1px solid; border-color: #a0a0a0 #fff #fff #a0a0a0; background: #fff; }
.spectrum { width: 20px; border: 1px solid #000; background: linear-gradient(#b40000, #ff0000 11%, #ff8c00 17%, #e0a800 24%, #ccc400 28%, #ffff00 36%, #70f800 39%, #00ff00 45%, #00e080 54%, #00ffff 64%, #00a0ff 73%, #0060ff 80%, #0000ff 84%, #0000a8 91%, #000096); }
.scale ul { display: flex; flex: 1; flex-direction: column; justify-content: space-between; margin: -6px 0; }
.scale li { display: flex; align-items: center; justify-content: space-between; line-height: 13px; }
.scale li i { width: 6px; height: 1px; background: #000; }
.extreme { display: grid; grid-template-columns: 1fr 26px; gap: 3px; margin-top: 5px; padding: 2px 24px 1px 0; height: 33px; border: solid #a8a8e8; border-width: 0 1px 1px 0; background: #f7f7f7; text-align: right; }
.btn { display: grid; place-items: center; background: #f0f0f0; border: 1px solid; border-color: #fff #696969 #696969 #fff; box-shadow: inset -1px -1px #a0a0a0; }
.find { width: 27px; height: 23px; }
.page .find { margin: 7px 0 0 auto; }
.tabrow { display: flex; }
.tabrow .edge { width: 12px; height: 1px; background: #333; }
.edge.end { flex: 1; }
.ptab { display: flex; align-items: center; gap: 4px; height: 21px; padding: 0 4px; border: solid #333; border-width: 0 2px 2px 0; border-left: 1px solid #fff; border-radius: 0 0 4px 4px; white-space: nowrap; }

.lower { padding: 4px 3px 4px 17px; }
.lower h2 { height: 16px; padding-left: 416px; background: #bfcddb; font-weight: 700; font-size: 12px; line-height: 16px; }
.sheet { display: flex; height: 148px; margin-top: 25px; padding: 3px 2px 5px; border: 1px solid #696969; border-bottom-width: 2px; }
table { flex: 1; height: 130px; table-layout: fixed; width: 100%; border-collapse: collapse; }
.cu { width: 48px; }
.cc { width: 192px; }
th { height: 17px; padding: 0; font-weight: 400; text-align: center; border: 1px solid #a0a0a0; line-height: 13px; }
.size { text-align: right; padding-right: 23px; }
td { height: 16px; padding: 0 4px; border: 1px solid #a0a0a0; background: #fff; line-height: 13px; white-space: nowrap; }
td.num { text-align: right; }
td sup { font-size: 10px; vertical-align: 3px; }
.tint td { background: #fffbf0; }
.vscroll { display: flex; flex-direction: column; width: 17px; background: #f7f7f7; }
.vscroll button, .thumb, .navs button { display: grid; place-items: center; width: 16px; height: 16px; background: #f0f0f0; border: 1px solid; border-color: #fff #696969 #696969 #fff; }
.thumb { height: 18px; margin-bottom: auto; }
.sheets { display: flex; height: 17px; }
.sheets > a { padding: 1px 3px 0 4px; background: #e2e2e2; border: solid #696969; border-width: 0 1px 1px 0; border-radius: 0 0 5px 4px; line-height: 15px; white-space: nowrap; }
.sheets > .cur { background: #f0f0f0; }
.navs { display: flex; margin-left: auto; }
.tray { height: 16px; margin-top: 2px; border: 1px solid; border-color: #a0a0a0 #fff #fff #a0a0a0; }

.status { display: flex; height: 19px; background: #f0f0f0; border-top: 1px solid #a0a0a0; font: 12px/16px Roboto, "Noto Sans", sans-serif; }
.msg { flex: 1; padding: 3px 0 0 2px; }
.status i { width: 86px; height: 15px; margin: 3px 1px 0; border: solid #a0a0a0; border-width: 1px 1px 0 1px; }
.status .wide { width: 127px; }

.dialog { position: absolute; left: 138px; top: 132px; width: 484px; border: 1px solid #666; background: #f0f0f0; box-shadow: 2px 5px 14px rgba(0, 0, 0, .4); }
.dtitle { display: flex; align-items: center; justify-content: space-between; height: 24px; padding: 0 10px 0 2px; background: #fff; font: 12px/16px Roboto, "Noto Sans", sans-serif; }
.dtitle svg { fill: none; stroke: #000; }
.dtabs { display: flex; align-items: flex-end; margin: 9px 0 0 9px; }
.dtabs a { height: 17px; padding: 2px 4px 0 4px; border: solid #fff; border-width: 1px 0 0 1px; border-right: 2px solid #808080; white-space: nowrap; }
.dtabs .cur { height: 20px; margin-bottom: -1px; padding: 3px 4px 0 5px; background: #f0f0f0; }
.dpage { display: grid; grid-template-columns: 181px 255px; gap: 8px; height: 450px; margin: 0 8px; padding: 9px 7px; border: 1px solid #fff; border-right: 2px solid #808080; border-bottom: 2px solid #808080; }
.col { display: flex; flex-direction: column; gap: 12px; }
.group { display: flex; flex-direction: column; }
.group h3 { height: 15px; padding: 2px 2px 0; background: #dce6ff; color: #000066; clip-path: polygon(0 0, calc(100% - 10px) 0, 100% 10px, 100% 100%, 0 100%); white-space: nowrap; }
.body { flex: 1; border: solid #a8a8e8; border-width: 0 1px 1px 0; background: #f7f7f7; }
.norm { height: 118px; }
.second { height: 79px; }
.third { height: 156px; }
.norm .body { padding: 10px 10px 0 6px; }
.annex { display: flex; align-items: flex-start; justify-content: space-between; margin-top: 9px; padding-right: 2px; }
.picker { position: relative; width: 129px; }
.annex .find { margin-top: 2px; }
.popup { position: absolute; left: 0; top: 21px; z-index: 2; display: flex; width: 129px; border: 1px solid #696969; background: #fff; }
.popup ul { flex: 1; }
.popup li { height: 13px; padding-left: 2px; line-height: 13px; white-space: nowrap; }
.popup li[aria-selected="true"] { background: #0078d7; color: #fff; }
.pscroll { display: flex; flex-direction: column; width: 16px; background: #f0f0f0; }
.pscroll i { flex: 1; background: #cdcdcd; }
.mark { position: absolute; left: -11px; top: -4px; z-index: 3; width: 146px; height: 336px; border: 5px solid #3f48cc; pointer-events: none; }
.stubs { display: flex; flex-direction: column; gap: 8px; padding-top: 10px; }
.stubs i { width: 8px; height: 8px; margin-left: 3px; border-radius: 4px; background: #808080; }
.tail { display: flex; align-items: center; justify-content: space-between; height: 8px; padding-right: 36px; }
hr { width: auto; margin: 3px 3px; border: 0; border-top: 1px solid #a0a0a0; }
.theory { display: flex; padding: 8px 4px 4px; }
.theory > span { width: 88px; padding-top: 1px; }
.opts { display: flex; flex-direction: column; gap: 4px; }
.opts label { display: flex; align-items: center; gap: 5px; height: 15px; }
.opts input { appearance: none; width: 12px; height: 12px; margin: 0; border: 1px solid; border-color: #808080 #e0e0e0 #e0e0e0 #808080; border-radius: 6px; background: #fff; }
.opts input:checked { background: radial-gradient(circle, #000 2px, #fff 3px); }
.coef .body { padding: 8px 0 14px 3px; }
.intro { padding-bottom: 1px; white-space: nowrap; }
.line { display: flex; align-items: center; height: 21px; }
.line label:first-child { width: 90px; }
.line .sym { width: 50px; padding-right: 4px; text-align: right; white-space: nowrap; }
.spin { display: flex; width: 74px; height: 20px; margin-left: 1px; border: 2px solid; border-color: #808080 #e3e3e3 #e3e3e3 #808080; background: #fff; }
.spin input { flex: 1; min-width: 0; padding: 0; border: 0; background: none; font: inherit; text-align: right; color: #000; }
.spin > span { display: flex; flex-direction: column; width: 15px; }
.spin button { display: grid; flex: 1; place-items: center; background: #f0f0f0; border: 1px solid; border-color: #fff #808080 #808080 #fff; }
.spin .up { border-width: 0 2px 2px; }
.spin .down { border-width: 2px 2px 0; }
.coef hr { margin: 6px 4px 6px 0; }
.tall { height: 42px; align-items: flex-end; }
.line.tall label { width: 115px; padding-bottom: 2px; }
.tall .sym { width: 25px; padding: 0 4px 3px 0; }
.sub { padding: 3px 0 4px; }
.chk { display: flex; justify-content: flex-end; }
.line .chk:first-child { width: 85px; }
.chk + .sym { width: 55px; }
.chk input { display: grid; justify-content: center; appearance: none; width: 12px; height: 12px; margin: 0; border: 1px solid; border-color: #696969 #e3e3e3 #e3e3e3 #696969; background: #fff; }
.chk input:checked::after { content: ""; width: 4px; height: 7px; margin-top: 1px; border: solid #000; border-width: 0 2px 2px 0; transform: rotate(40deg); }
.off .sym, .off .u, .off .spin input { color: #808080; }
.off .spin { background: #f0f0f0; }
.off .up { border-bottom-color: #999; }
.off .down { border-top-color: #999; }
.u { margin-left: 7px; }
.ratio .body { padding: 4px 0 5px 3px; }
.ratio .line label:first-child { width: 52px; }
.ratio .line .sym { width: 41px; }
.dfoot { display: flex; gap: 7px; padding: 8px 14px 8px 7px; }
.sq { width: 27px; height: 24px; }
.dec { align-content: center; font: italic 700 10px/10px "Liberation Serif", serif; }
.dec u { color: #2a3a8a; }
.gap { flex: 1; }
.wide.btn { width: 76px; height: 23px; }
.def { border-color: #696969; box-shadow: inset 1px 1px #fff, inset -1px -1px #808080; }
</style>
